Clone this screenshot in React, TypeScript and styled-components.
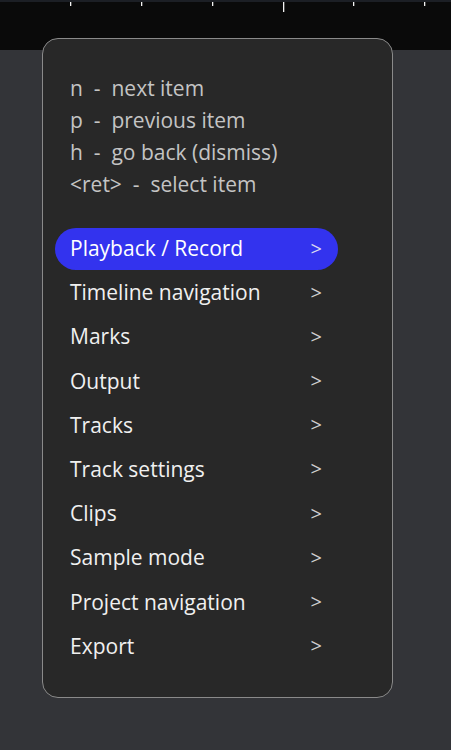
import React, { FC } from 'react';
import styled, { createGlobalStyle } from 'styled-components';

const GlobalStyle = createGlobalStyle`
  html, body {
    margin: 0;
    padding: 0;
    background: #333438;
    font-family: 'Open Sans', 'Noto Sans', sans-serif;
  }
`;

const help = [
  ['n', 'next item'],
  ['p', 'previous item'],
  ['h', 'go back (dismiss)'],
  ['<ret>', 'select item'],
];

const items = [
  'Playback / Record',
  'Timeline navigation',
  'Marks',
  'Output',
  'Tracks',
  'Track settings',
  'Clips',
  'Sample mode',
  'Project navigation',
  'Export',
];

const ticks = [70, 141, 212, 283, 353, 424];

const Ruler: FC = () => (
  <RulerBar>
    <svg width="451" height="50" viewBox="0 0 451 50">
      <rect x="0" y="0" width="451" height="2" fill="#1c1f25" />
      {ticks.map((x) => (
        <rect key={x} x={x} y={2} width={1.3} height={x === 283 ? 10 : 4} fill="#f2f2f2" />
      ))}
    </svg>
  </RulerBar>
);

export const App: FC = () => {
  const selected = 0;
  return (
    <Page>
      <GlobalStyle />
      <Ruler />
      <Menu>
        <HelpList>
          {help.map(([key, text]) => (
            <HelpLine key={key}>
              {key}&nbsp;&nbsp;-&nbsp;&nbsp;{text}
            </HelpLine>
          ))}
        </HelpList>
        <ItemList>
          {items.map((label, i) => (
            <Item key={label} $active={i === selected}>
              <span>{label}</span>
              <Chevron $active={i === selected}>&gt;</Chevron>
            </Item>
          ))}
        </ItemList>
      </Menu>
    </Page>
  );
};

const Page = styled.div`
  position: relative;
  width: 451px;
  height: 750px;
  overflow: hidden;
  background: #333438;
`;

const RulerBar = styled.div`
  height: 50px;
  background: #0a0a0a;

  svg {
    display: block;
  }
`;

const Menu = styled.div`
  position: absolute;
  left: 42px;
  top: 38px;
  width: 349px;
  height: 658px;
  box-sizing: content-box;
  border: 1px solid #8a8a8a;
  border-radius: 16px;
  background: #282828;
  display: flex;
  flex-direction: column;
`;

const HelpList = styled.div`
  display: flex;
  flex-direction: column;
  padding: 33px 0 0 27px;
`;

const HelpLine = styled.div`
  height: 32px;
  line-height: 32px;
  font-size: 21px;
  font-weight: 400;
  color: #c4c4c4;
  white-space: pre;
`;

const ItemList = styled.div`
  display: flex;
  flex-direction: column;
  gap: 2.2px;
  margin-top: 28px;
  padding: 0 54px 0 12px;
`;

const Item = styled.div<{ $active: boolean }>`
  display: flex;
  align-items: center;
  justify-content: space-between;
  box-sizing: border-box;
  height: 42px;
  padding: 0 16px 2px 15px;
  border-radius: 21px;
  font-size: 21px;
  color: ${({ $active }) => ($active ? '#ffffff' : '#f0f0f0')};
  background: ${({ $active }) => ($active ? '#3333ee' : 'transparent')};
`;

const Chevron = styled.span<{ $active: boolean }>`
  font-size: 20px;
  color: ${({ $active }) => ($active ? '#d8d8f0' : '#cfcfcf')};
`;

export default App;
